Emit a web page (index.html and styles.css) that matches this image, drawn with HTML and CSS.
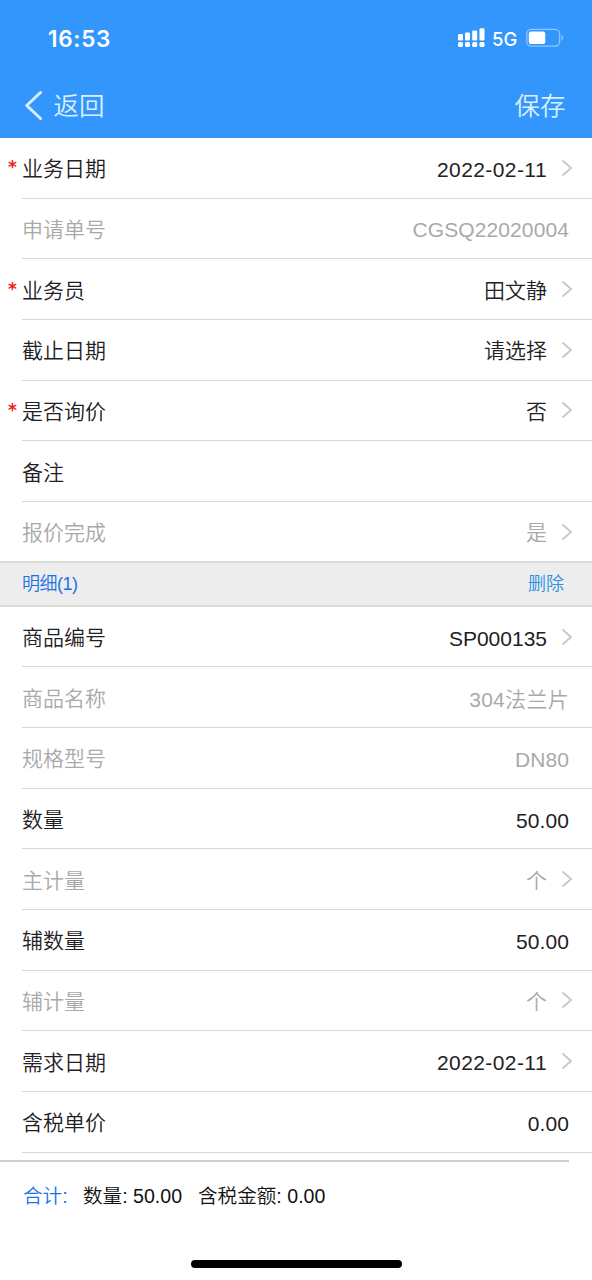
FILE: index.html
```html
<!DOCTYPE html>
<html lang="zh-CN">
<head>
<meta charset="utf-8">
<title>采购申请</title>
<link rel="stylesheet" href="styles.css">
</head>
<body>
<svg class="defs" width="0" height="0"><symbol id="chev" viewBox="0 0 12 18"><path d="M1.500 1.500 10 9l-8.500 7.500" fill="none" stroke="#c7c7cc" stroke-width="1.900"/></symbol></svg>
<header class="top">
  <div class="status">
    <span class="time">16:53</span>
    <div class="indicators">
      <svg class="signal" width="27" height="20" viewBox="0 0 27 20" fill="#fff"><rect x="0" y="6" width="5" height="6.500" rx="1.300"/><rect x="7" y="4.500" width="5" height="8" rx="1.300"/><rect x="14.200" y="2.500" width="5" height="10" rx="1.300"/><rect x="21.500" y="0.300" width="5" height="12.200" rx="1.300"/><rect x="0" y="14" width="5" height="5" rx="1.500"/><rect x="7" y="14" width="5" height="5" rx="1.500"/><rect x="14.200" y="14" width="5" height="5" rx="1.500"/><rect x="21.500" y="14" width="5" height="5" rx="1.500"/></svg>
      <span class="net">5G</span>
      <svg class="battery" width="38" height="20" viewBox="0 0 38 20"><rect x="0.800" y="1.300" width="32.800" height="16.800" rx="4.500" fill="none" stroke="#8ec6ff" stroke-width="1.300"/><rect x="2.800" y="3.500" width="16.500" height="12.500" rx="2.200" fill="#fff"/><path d="M35.500 7c2.300 1.200 2.300 4.400 0 5.600z" fill="#8ec6ff"/></svg>
    </div>
  </div>
  <nav class="nav">
    <span class="back"><svg width="20" height="32" viewBox="0 0 20 32"><path d="M16.500 2.500 2.700 15.500 16.500 28.500" fill="none" stroke="#d9efff" stroke-width="3" stroke-linecap="round" stroke-linejoin="round"/></svg><span class="nav-text">返回</span></span>
    <span class="nav-text">保存</span>
  </nav>
</header>
<main>
  <section>
    <div class="row"><span class="label req">业务日期</span><span class="value date">2022-02-11</span><svg class="chev"><use href="#chev"/></svg></div>
    <div class="row off"><span class="label">申请单号</span><span class="value">CGSQ22020004</span></div>
    <div class="row"><span class="label req">业务员</span><span class="cn">田文静</span><svg class="chev"><use href="#chev"/></svg></div>
    <div class="row"><span class="label">截止日期</span><span class="cn">请选择</span><svg class="chev"><use href="#chev"/></svg></div>
    <div class="row"><span class="label req">是否询价</span><span class="cn">否</span><svg class="chev"><use href="#chev"/></svg></div>
    <div class="row"><span class="label">备注</span></div>
    <div class="row off last"><span class="label">报价完成</span><span class="cn">是</span><svg class="chev"><use href="#chev"/></svg></div>
  </section>
  <div class="group"><span class="detail">明细(1)</span><span class="del">删除</span></div>
  <section>
    <div class="row"><span class="label">商品编号</span><span class="value code">SP000135</span><svg class="chev"><use href="#chev"/></svg></div>
    <div class="row off"><span class="label">商品名称</span><span class="mixed">304法兰片</span></div>
    <div class="row off"><span class="label">规格型号</span><span class="value">DN80</span></div>
    <div class="row"><span class="label">数量</span><span class="value">50.00</span></div>
    <div class="row off"><span class="label">主计量</span><span class="cn">个</span><svg class="chev"><use href="#chev"/></svg></div>
    <div class="row"><span class="label">辅数量</span><span class="value">50.00</span></div>
    <div class="row off"><span class="label">辅计量</span><span class="cn">个</span><svg class="chev"><use href="#chev"/></svg></div>
    <div class="row"><span class="label">需求日期</span><span class="value date">2022-02-11</span><svg class="chev"><use href="#chev"/></svg></div>
    <div class="row"><span class="label">含税单价</span><span class="value">0.00</span></div>
  </section>
</main>
<footer class="totals">
  <div class="sum"><span class="sum-label">合计:</span><span class="qty">数量: 50.00</span><span>含税金额: 0.00</span></div>
  <div class="home"></div>
</footer>
</body>
</html>
```
FILE: styles.css
```css
* { box-sizing: border-box; }
body {
  margin: 0;
  width: 592px;
  height: 1280px;
  display: flex;
  flex-direction: column;
  overflow: hidden;
  background: #fff;
  color: #1f2124;
  font-family: "Liberation Sans", "Noto Sans CJK SC", sans-serif;
  font-size: 21px;
  font-weight: 350;
}
.defs { display: none; }
.top { height: 138px; flex: none; background: #3396fd; }
.status { height: 76px; padding: 0 28px 0 48px; display: flex; align-items: center; justify-content: space-between; color: #fff; font-family: Inter, sans-serif; }
.time { font-size: 22.5px; font-weight: 600; letter-spacing: 0.7px; }
.indicators { display: flex; align-items: center; }
.net { font-size: 18.5px; font-weight: 500; margin-left: 7px; padding-top: 1px; width: 34px; }
.nav { height: 60px; padding: 0 26.5px 0 24px; display: flex; align-items: center; justify-content: space-between; font-size: 25.5px; color: #d9efff; }
.nav-text { padding-bottom: 5px; }
.back { display: flex; align-items: center; gap: 9.5px; }
.row { height: 60.65px; margin-left: 22px; padding-right: 23px; border-bottom: 1px solid #d8d8da; display: flex; align-items: center; }
.row.last { border-bottom-color: transparent; }
.row.off { color: #a9a9a9; }
.label { position: relative; flex: 1; padding-bottom: 1px; }
.cn { padding-bottom: 1px; }
.value { padding-top: 4px; letter-spacing: 0.1px; }
.mixed { padding-top: 1px; letter-spacing: 0.3px; }
.req::before { content: "*"; position: absolute; left: -14px; top: 1px; color: #f02020; font: bold 17px/28px "DejaVu Sans", sans-serif; }
.date { letter-spacing: 0.42px; }
.code { letter-spacing: 0; }
.chev { width: 12px; height: 18px; margin: 0 -3.500px 0 13.500px; flex: none; }
.group { height: 45.7px; margin-top: -1.400px; padding: 0 28px 0 22px; display: flex; align-items: center; justify-content: space-between; position: relative; background: #ededed; border: solid #dadada; border-width: 2px 0; font-size: 18px; color: #1a74e8; }
.detail { padding-bottom: 3px; letter-spacing: -0.5px; }
.del { padding-bottom: 3px; color: #2b8fe6; }
.totals { flex: 1; margin-top: 7.5px; }
.sum { width: 569px; height: 72px; padding: 0 0 5px 23px; display: flex; align-items: center; border-top: 2px solid #cfcfcf; color: #111; font-size: 19.6px; }
.sum-label { width: 60px; color: #1a74e8; }
.qty { width: 115px; }
.home { width: 211px; height: 8px; margin: 28px 0 0 191px; border-radius: 4px; background: #000; }
```
